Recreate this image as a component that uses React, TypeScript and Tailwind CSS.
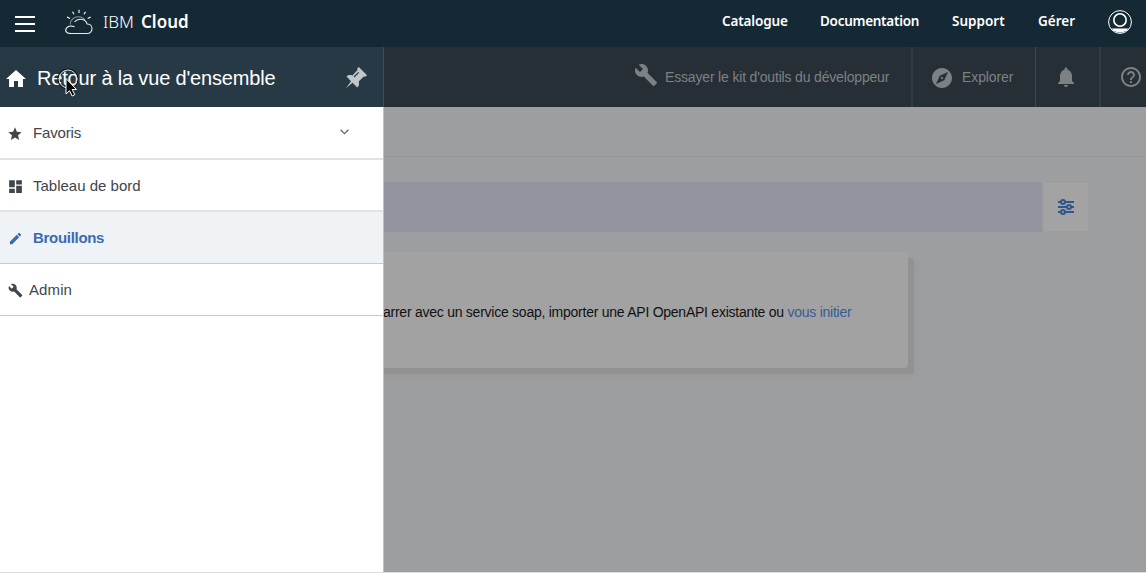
import React from "react";
import {
  MdBuild,
  MdDashboard,
  MdEdit,
  MdExplore,
  MdHelpOutline,
  MdHome,
  MdNotifications,
  MdStar,
} from "react-icons/md";

const sans = "font-['Liberation_Sans',Arial,sans-serif]";
const brand = "font-['Noto_Sans',sans-serif]";

function CloudLogo() {
  return (
    <svg className="ml-[30px] h-7 w-7 shrink-0" viewBox="0 0 28 28" fill="none" stroke="#fff" strokeWidth="1.1">
      <path d="M6 24.500h16.300a4.700 4.700 0 0 0 4.700-4.800c0-3-2.300-4.700-4.800-4.700a7.300 7.300 0 0 0-7.200-4.700c-2.500.1-4.300 1.200-5.500 2.700" opacity=".9" />
      <path d="M9.500 17.700C4 15.700.7 18.400.7 21.100c0 2.200 2.200 3.400 5.300 3.400" />
      <path d="M5.200 15.500c.1-4.500 3.800-7.800 8.300-7.800 3 0 5.200 1.200 6.300 3.300" opacity=".5" />
      <path d="M14 .700v3.300M7.500 2.700l1.500 2.500M2 8l3 1.500M20.500 2.700 19 5.200M25.700 8l-3 1.500" />
    </svg>
  );
}

function Header() {
  return (
    <header className={`${brand} flex h-[47px] shrink-0 bg-[#152935] text-white`}>
      <div className="flex h-[46px] items-center">
        <div className="ml-[15px] mt-[1px] flex w-5 flex-col gap-[5px]">
          <i className="h-[2px] bg-white" />
          <i className="h-[2px] bg-white" />
          <i className="h-[2px] bg-white" />
        </div>
        <CloudLogo />
        <div className="mb-[3px] ml-[10px] flex text-[17px] leading-6">
          <span className="w-[38px] font-light">IBM</span>
          <span className="font-semibold">Cloud</span>
        </div>
      </div>
      <nav className="ml-auto flex h-[43px] items-center whitespace-nowrap text-[13.5px] font-semibold">
        <span className="w-[98px] tracking-[-0.15px]">Catalogue</span>
        <span className="w-[132px] tracking-[-0.28px]">Documentation</span>
        <span className="w-[86px]">Support</span>
        <span className="w-[70px]">Gérer</span>
      </nav>
      <svg className="mr-[14px] mt-[10px] h-6 w-6" viewBox="0 0 24 24" fill="none" stroke="#fff">
        <circle cx="12" cy="12" r="11.400" />
        <circle cx="12" cy="10" r="6.200" strokeWidth="1.600" />
        <path d="M3.500 18.500h17a11 11 0 0 1-17 0Z" fill="#fff" stroke="none" />
      </svg>
    </header>
  );
}

function Toolbar() {
  return (
    <div className="flex h-[60px] shrink-0 bg-[#262f35] text-[14px] text-[#7d8184]">
      <div className="flex flex-1 items-center whitespace-nowrap pl-[250px]">
        <MdBuild className="-mt-1 h-6 w-6 shrink-0" />
        <span className="ml-[7px] tracking-[-0.17px]">Essayer le kit d'outils du développeur</span>
      </div>
      <div className="flex w-[124px] items-center border-l-2 border-[#303b42] pl-[17px]">
        <MdExplore className="mt-[2px] h-6 w-6" />
        <span className="ml-2 tracking-[-0.1px]">Explorer</span>
      </div>
      <div className="flex w-[64px] items-center justify-center border-l border-[#3d474d]">
        <MdNotifications className="mr-1 h-6 w-6" />
      </div>
      <div className="flex w-[47px] items-center border-l-2 border-[#303b42] pl-[18px]">
        <MdHelpOutline className="h-6 w-6 shrink-0" />
      </div>
    </div>
  );
}

function FilterIcon() {
  return (
    <svg className="h-4 w-4" viewBox="0 0 16 16" fill="none" stroke="#30568e" strokeWidth="2">
      <path d="M0 3h3M7 3h9M0 8h9M13 8h3M0 13h3M7 13h9" />
      <circle cx="5" cy="3" r="2" />
      <circle cx="11" cy="8" r="2" />
      <circle cx="5" cy="13" r="2" />
    </svg>
  );
}

function Content() {
  return (
    <main className="flex min-w-0 flex-1 flex-col overflow-hidden bg-[#9d9ea0]">
      <Toolbar />
      <div className="h-[50px] shrink-0 border-b border-[#949698]" />
      <div className="mt-[25px] flex h-[50px] shrink-0 items-center">
        <div className="h-[50px] w-[658px] bg-[#9295a0]" />
        <div className="ml-[2px] flex h-12 w-11 items-center justify-center bg-[#a3a3a3]">
          <FilterIcon />
        </div>
      </div>
      <div className="-ml-5 mt-5 h-[116px] w-[544px] whitespace-nowrap rounded-sm bg-[#a2a2a2] pl-[19px] pt-[52px] text-[14px] leading-4 tracking-[-0.25px] text-[#111] shadow-[6px_6px_0_#929292,9px_9px_4px_#999b9d]">
        <span>arrer avec un service soap, importer une API OpenAPI existante ou </span>
        <span className="text-[#365d94]">vous initier</span>
      </div>
    </main>
  );
}

function Pin() {
  return (
    <svg className="ml-auto mr-[15px] h-[23px] w-[23px]" viewBox="0 0 23 23" fill="#c1c6c9">
      <path d="M13.800 1 22 9.200 20.300 10.700 18.800 10.400 13.700 15.500C14.500 18 14 20 12.300 21.500L7.500 16.700.8 22.200 6 15.300 1.500 10.500C3.200 9 5 8.700 7.500 9.400L12.500 4 12.200 2.600Z" />
      <path d="m9 11 4.700-4.700" stroke="#273945" strokeWidth="1.200" />
    </svg>
  );
}

function Drawer() {
  return (
    <aside className="flex w-96 shrink-0 flex-col border-r border-[#bdc2c6] bg-white text-[15px] text-[#40464a]">
      <div className="relative -mr-px flex h-[60px] items-center border-r border-[#3d4e58] bg-[#273945] pl-1 text-white">
        <MdHome className="mt-1 h-6 w-6 shrink-0" />
        <span className="ml-[9px] mt-[2px] whitespace-nowrap text-[20px] tracking-[-0.17px]">Retour à la vue d'ensemble</span>
        <Pin />
        <svg className="absolute left-[57px] top-[21px] h-[30px] w-[22px]" viewBox="0 0 22 30">
          <circle cx="11" cy="11" r="10" fill="none" stroke="#111" strokeWidth="1.200" />
          <circle cx="11" cy="11" r="9" fill="none" stroke="#ddd" />
          <path d="M9 10.500v15.500l3.500-3.300 2.700 5.300 2.600-1.300-2.600-5.200h4.300Z" fill="#080808" stroke="#fff" />
        </svg>
      </div>
      <div className="flex h-[53px] items-center border-b-2 border-[#dfe3e6] pl-[7px]">
        <MdStar className="mt-[2px] h-4 w-4" />
        <span className="ml-[10px] mt-[1px] tracking-[-0.15px]">Favoris</span>
        <svg className="mb-[2px] ml-auto mr-[34px] h-[6px] w-[9px]" viewBox="0 0 9 6" fill="none" stroke="#626a6e" strokeWidth="1.300">
          <path d="m.6.7 3.900 3.900L8.400.7" />
        </svg>
      </div>
      <div className="flex h-[52px] items-center border-b-2 border-[#dfe3e6] pl-[7px] pt-[3px]">
        <MdDashboard className="h-[17px] w-[17px]" />
        <span className="ml-[9px]">Tableau de bord</span>
      </div>
      <div className="flex h-[52px] items-center border-b border-[#c8cbcd] bg-[#eff3f6] pl-2 pt-[1px] font-bold text-[#3b6ab2]">
        <MdEdit className="h-[15px] w-[15px]" />
        <span className="ml-[10px] tracking-[-0.3px]">Brouillons</span>
      </div>
      <div className="flex h-[52px] items-center border-b border-[#c8cbcd] pl-2 pt-[2px]">
        <MdBuild className="h-[15px] w-[15px]" />
        <span className="ml-[6px] tracking-[0.1px]">Admin</span>
      </div>
    </aside>
  );
}

export default function App() {
  return (
    <div className={`${sans} flex h-[575px] w-[1146px] flex-col overflow-hidden bg-white`}>
      <Header />
      <div className="flex h-[525px] shrink-0">
        <Drawer />
        <Content />
      </div>
      <div className="h-px bg-[#dedede]" />
    </div>
  );
}
